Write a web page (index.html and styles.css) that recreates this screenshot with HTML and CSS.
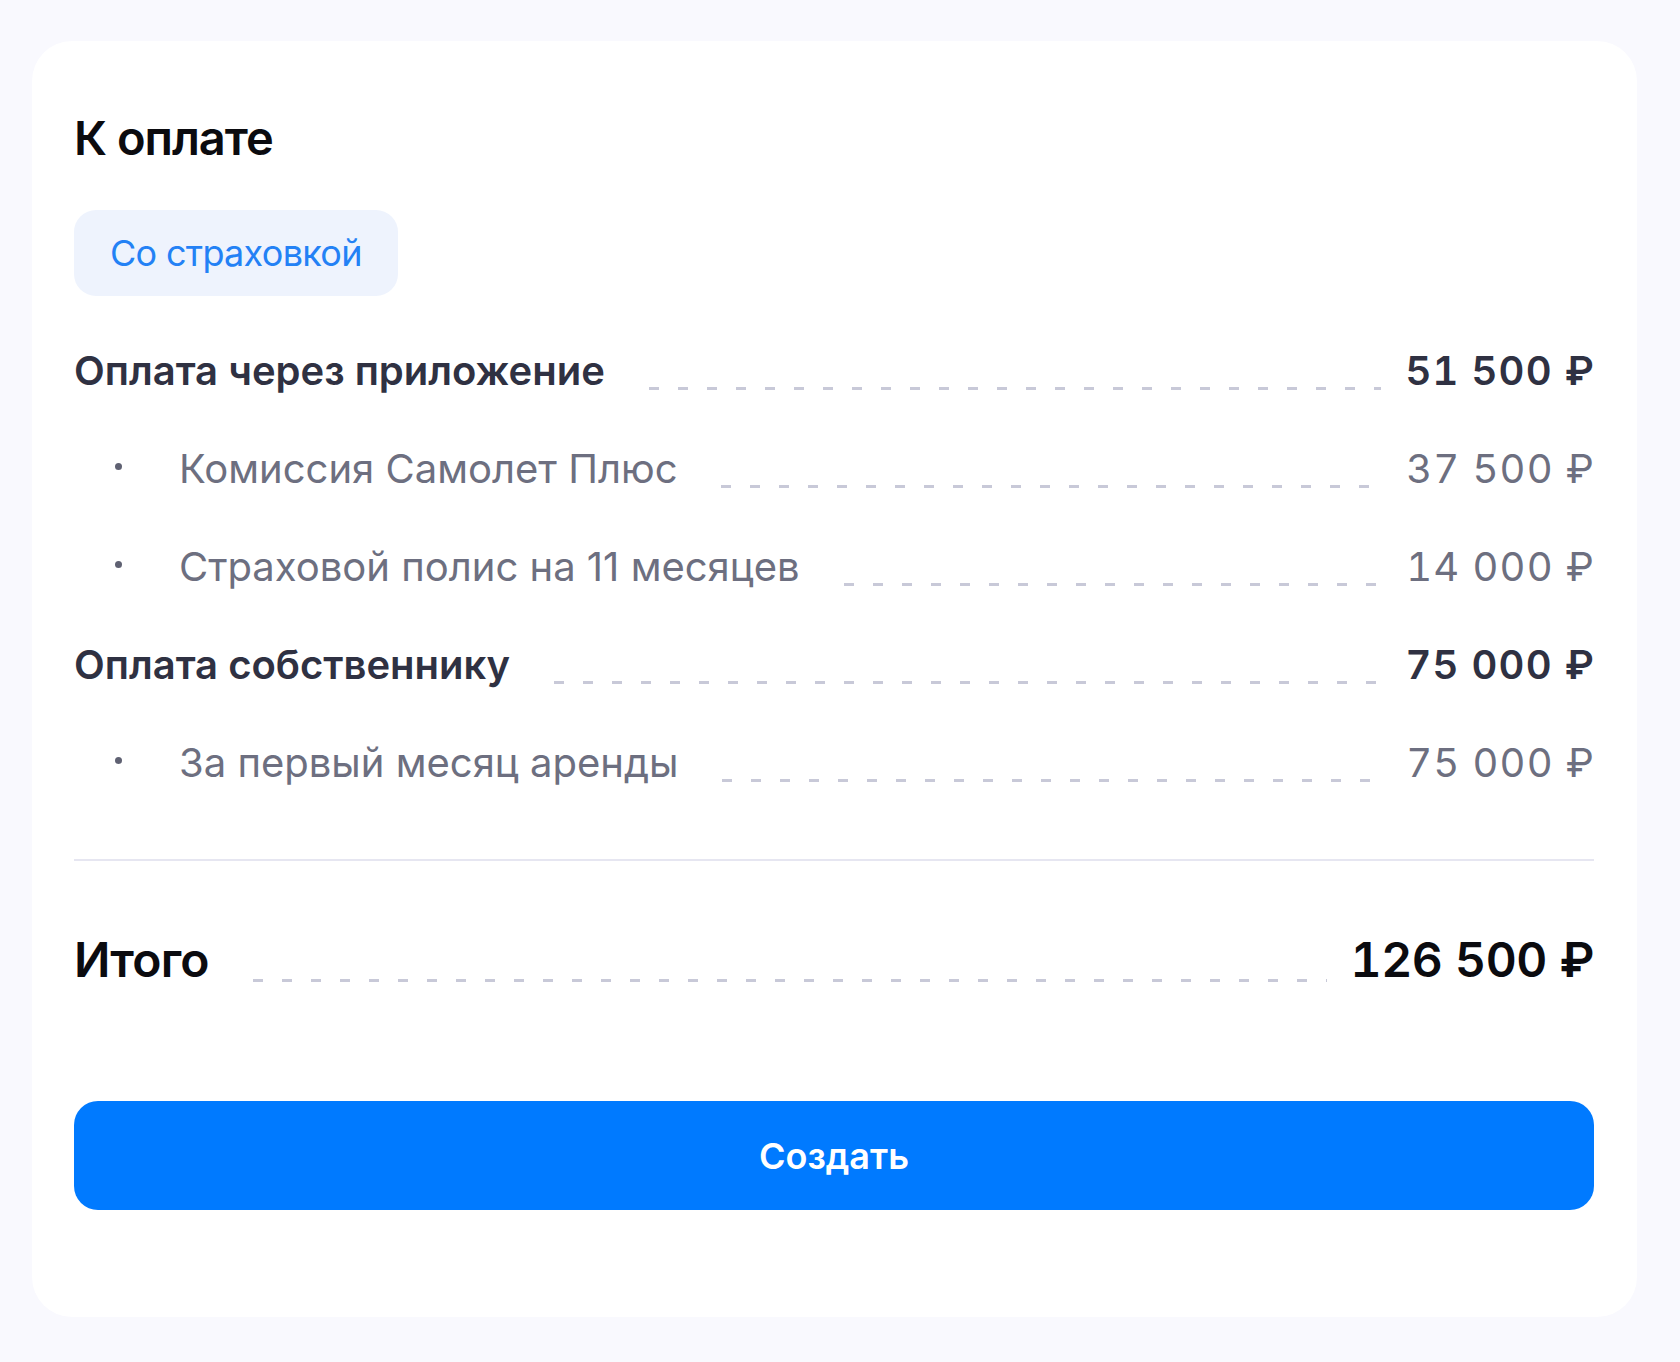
FILE: index.html
```html
<!DOCTYPE html>
<html lang="ru">
<head>
<meta charset="utf-8">
<title>К оплате</title>
<link rel="stylesheet" href="styles.css">
</head>
<body>
<div class="card">
  <h1 class="title">К оплате</h1>
  <div class="chip">Со страховкой</div>
  <div class="rows">
    <div class="row row-main">
      <span class="label">Оплата через приложение</span>
      <span class="leader"></span>
      <span class="amount">51 500 ₽</span>
    </div>
    <div class="row row-sub">
      <span class="bullet"></span>
      <span class="label">Комиссия Самолет Плюс</span>
      <span class="leader"></span>
      <span class="amount">37 500 ₽</span>
    </div>
    <div class="row row-sub">
      <span class="bullet"></span>
      <span class="label">Страховой полис на 11 месяцев</span>
      <span class="leader"></span>
      <span class="amount">14 000 ₽</span>
    </div>
    <div class="row row-main">
      <span class="label">Оплата собственнику</span>
      <span class="leader"></span>
      <span class="amount">75 000 ₽</span>
    </div>
    <div class="row row-sub">
      <span class="bullet"></span>
      <span class="label">За первый месяц аренды</span>
      <span class="leader"></span>
      <span class="amount">75 000 ₽</span>
    </div>
  </div>
  <div class="divider"></div>
  <div class="row row-total">
    <span class="label">Итого</span>
    <span class="leader"></span>
    <span class="amount">126 500 ₽</span>
  </div>
  <button class="btn" type="button">Создать</button>
</div>
</body>
</html>
```
FILE: styles.css
```css
* { box-sizing: border-box; }

html, body {
  margin: 0;
  background: #f9f9fe;
}

body {
  padding: 41px 43px 44px 32px;
  font-family: Inter, "Noto Sans", Roboto, sans-serif;
}

.card {
  background: #ffffff;
  border-radius: 40px;
  padding: 68px 43px 107px 42px;
  display: flex;
  flex-direction: column;
}

.title {
  margin: 0;
  font-size: 47px;
  line-height: 58px;
  font-weight: 600;
  color: #0b0b0f;
  letter-spacing: -1px;
}

.chip {
  align-self: flex-start;
  margin-top: 43px;
  height: 86px;
  padding: 0 36px;
  display: flex;
  align-items: center;
  background: #eef3fd;
  border-radius: 22px;
  color: #2381f5;
  font-size: 36px;
  font-weight: 400;
  letter-spacing: -0.7px;
}

.rows {
  margin-top: 51px;
  display: flex;
  flex-direction: column;
  gap: 50px;
}

.row {
  display: flex;
  align-items: flex-start;
  font-size: 40px;
  line-height: 48px;
}

.row .label,
.row .amount {
  white-space: nowrap;
}

.row .amount {
  font-variant-numeric: tabular-nums;
  letter-spacing: 1.2px;
  margin-right: -1px;
}

.row-main {
  font-weight: 600;
  color: #2f3142;
}

.row-sub {
  font-weight: 400;
  color: #6d6f80;
  padding-left: 41px;
}

.bullet {
  width: 7px;
  height: 7px;
  border-radius: 50%;
  background: #5f6172;
  margin-right: 57px;
  align-self: center;
  margin-bottom: 6px;
}

.leader {
  flex: 1;
  align-self: flex-end;
  height: 3px;
  margin: 0 24px 5px 44px;
  background: repeating-linear-gradient(to right, #c8c9d8 0 10px, transparent 10px 29px);
}

.divider {
  margin-top: 72px;
  height: 2px;
  background: #e6e6f1;
}

.row-total {
  margin-top: 70px;
  font-size: 48px;
  line-height: 58px;
  font-weight: 600;
  color: #0b0b0f;
}

.row-total .label {
  letter-spacing: -0.8px;
}

.row-total .amount {
  letter-spacing: -0.4px;
  margin-right: 0;
}

.row-total .leader {
  margin-bottom: 7px;
}

.btn {
  margin-top: 112px;
  height: 109px;
  border: 0;
  border-radius: 24px;
  background: #007aff;
  color: #ffffff;
  font-family: inherit;
  font-size: 36px;
  font-weight: 600;
  cursor: pointer;
}
```
